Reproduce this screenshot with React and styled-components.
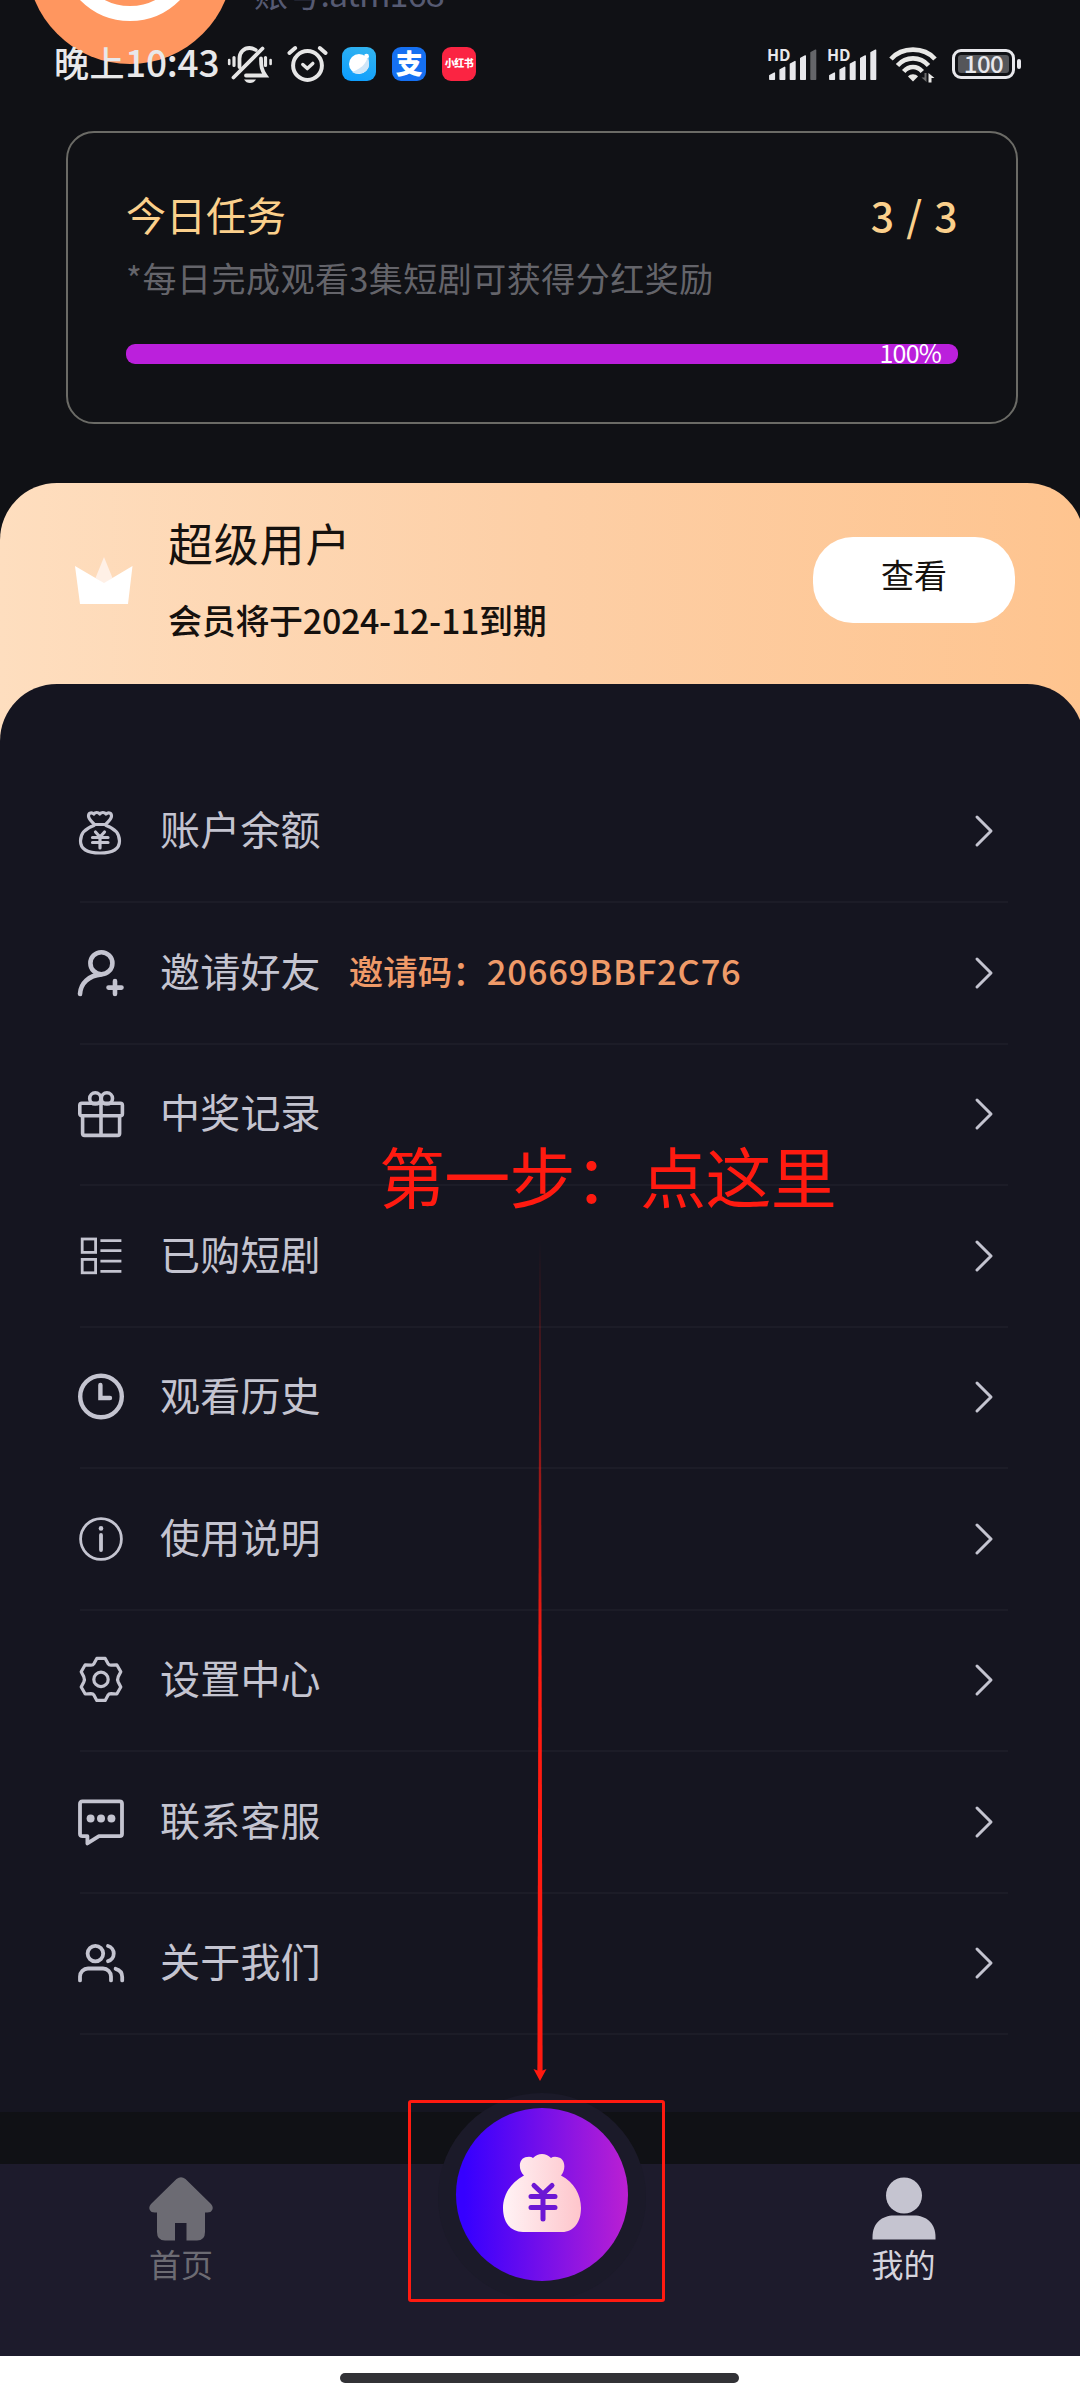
import styled, { createGlobalStyle } from 'styled-components';

const App = () => {
  return (
    <>
      <GlobalStyle />
      <Page>
        <StatusBar />
        <Profile>
          <Avatar>
            <AvatarRing />
          </Avatar>
          <Account>账号:atm168</Account>
        </Profile>
        <TaskCard done={3} total={3} />
        <MemberCard>
          <MemberInfo>
            <Crown />
            <MemberText>
              <MemberTitle>超级用户</MemberTitle>
              <MemberExpire>会员将于2024-12-11到期</MemberExpire>
            </MemberText>
            <ViewBtn>查看</ViewBtn>
          </MemberInfo>
          <Menu>
            {menus.map((el) => (
              <MenuRow key={el.label}>
                <MenuIcon viewBox="0 0 48 48">{el.icon}</MenuIcon>
                <MenuLabel>{el.label}</MenuLabel>
                {el.extra && (
                  <InviteCode>
                    {el.extra}
                    <Code>{el.code}</Code>
                  </InviteCode>
                )}
                <Chevron viewBox="0 0 24 36">
                  <path d="M5 4 L19 18 L5 32" />
                </Chevron>
              </MenuRow>
            ))}
          </Menu>
        </MemberCard>
        <TabBar />
        <HomeIndicator>
          <Handle />
        </HomeIndicator>
        <Guide />
      </Page>
    </>
  );
};

//StatusBar
const StatusBar = () => (
  <StatusWrapper>
    <Time>
      晚上<TimeNum>10:43</TimeNum>
    </Time>
    <StatusSvg width="46" height="40" viewBox="0 0 46 40">
      <g fill="none" stroke="#e6e6e6" strokeWidth="3.8" strokeLinecap="round">
        <path d="M12.5 23 V14.5 C12.5 8 17 4 22.5 4 C25 4 27 4.8 28.8 6" />
        <path d="M34 14.5 C34 22 34.5 26 38.5 31.5 H19" />
        <path d="M6.5 33.5 L35.5 4.5" />
        <path d="M7 13.5 V21.5 M38.5 13.5 V21.5" strokeWidth="3.2" />
        <path d="M2.2 16 V20 M43.6 16 V20" strokeWidth="2.6" />
      </g>
      <path d="M17 35.5 H29 C27.5 38 25.5 39 23 39 C20.5 39 18.5 38 17 35.5Z" fill="#e6e6e6" />
    </StatusSvg>
    <StatusSvg width="42" height="40" viewBox="0 0 42 40" $left={13}>
      <g fill="none" stroke="#e6e6e6" strokeLinecap="round" strokeLinejoin="round">
        <circle cx="21.5" cy="21.5" r="14.4" strokeWidth="4" />
        <path d="M3.4 9 L9.2 4 M39.6 9 L33.8 4" strokeWidth="4" />
        <path d="M16.8 20.5 L21.3 24.6 L26.8 19.4" strokeWidth="3.4" />
      </g>
    </StatusSvg>
    <AppBadge $bg="linear-gradient(200deg, #35b5ee, #0a9cff)" $left={14}>
      <svg width="34" height="34" viewBox="0 0 34 34">
        <circle cx="17" cy="17" r="10" fill="#fff" />
        <path d="M26 7 C26 13 22 21 10 25 C18 30 28 24 27 16Z" fill="#cfe6f8" />
        <circle cx="24.5" cy="9.2" r="2.4" fill="#fff" />
      </svg>
    </AppBadge>
    <AppBadge $bg="#1570f2" $left={16} $size={27}>
      支
    </AppBadge>
    <AppBadge $bg="#fb2442" $left={16} $size={10}>
      小红书
    </AppBadge>
    <Spacer />
    <Signal weak />
    <Signal />
    <StatusSvg width="50" height="40" viewBox="0 0 50 40" $left={9}>
      <g fill="none" stroke="#e8e8e6" strokeWidth="4.6">
        <path d="M3 15 C14 2.5 36 2.5 47 15" />
        <path d="M9.5 21.5 C18 12 32 12 40.5 21.5" />
        <path d="M15.7 27.5 C21 21.5 29 21.5 34.3 27.5" />
      </g>
      <path d="M25 37.5 L20 32.6 C22.5 29.6 27.5 29.6 30 32.6Z" fill="#e8e8e6" />
      <path d="M38.5 29 V38 L33.5 33.5 H36.5 V29Z" fill="#6b6b6b" />
      <path d="M40.5 38.5 V29 L46.5 34 H43.5 V38.5Z" fill="#e8e8e6" />
    </StatusSvg>
    <Battery>
      <BatteryLevel>100</BatteryLevel>
    </Battery>
    <BatteryTip />
  </StatusWrapper>
);

const bars = [0, 1, 2, 3, 4];

const Signal = ({ weak }) => (
  <StatusSvg width="52" height="40" viewBox="0 0 52 40" $left={8}>
    <HdText x="0" y="16.5">
      HD
    </HdText>
    {bars.map((i) => (
      <path
        key={i}
        d={`M${2.8 + i * 10.3} 35.2 V${31.5 - i * 5.7} L${7.4 + i * 10.3} ${29 - i * 5.7} V35.2Z`}
        fill={weak && i === 4 ? '#65666a' : '#e8e8ec'}
        stroke={weak && i === 4 ? '#65666a' : '#e8e8ec'}
        strokeWidth="1.4"
        strokeLinejoin="round"
      />
    ))}
  </StatusSvg>
);

//TaskCard
const TaskCard = ({ done, total }) => {
  const percent = Math.round((done / total) * 100);
  return (
    <TaskWrapper>
      <TaskHead>
        <span>今日任务</span>
        <TaskCount>
          {done} / {total}
        </TaskCount>
      </TaskHead>
      <TaskDesc>*每日完成观看3集短剧可获得分红奖励</TaskDesc>
      <Progress>
        <ProgressFill style={{ width: `${percent}%` }}>{percent}%</ProgressFill>
      </Progress>
    </TaskWrapper>
  );
};

const Crown = () => (
  <CrownSvg width="58" height="48" viewBox="0 0 58 48">
    <path d="M29 0 L37.5 21 L29 27 L20.5 21Z" fill="#fff0e6" />
    <path d="M0 9 L29 26 L57.5 9 L53 47 H5Z" fill="#fff" />
  </CrownSvg>
);

//Menu
const menus = [
  {
    label: '账户余额',
    icon: (
      <g strokeWidth="3.2">
        <path d="M17.5 17.5 C14 13.5 11.5 12 11.5 9 C11.5 5.5 15 5 16.8 7 C18.3 5 21.2 5 22.8 7 C24.4 5 27.4 5 29 7 C31 5 34.5 5.5 34.5 9 C34.5 12 32 13.5 28.5 17.5Z" />
        <path d="M17 18.5 C8 21.5 3.5 27.5 3.5 34 C3.5 42 10 46 23 46 C36 46 42.5 42 42.5 34 C42.5 27.5 38 21.5 29 18.5" />
        <path d="M18.5 25 L23 30 L27.5 25 M15.5 30.5 H31 M15.5 35.5 H31 M23 30 V41" />
      </g>
    ),
  },
  {
    label: '邀请好友',
    extra: '邀请码：',
    code: '20669BBF2C76',
    icon: (
      <g strokeWidth="4.6">
        <circle cx="24.4" cy="14.2" r="11" />
        <path d="M24.4 25.4 C12 26.5 3.6 34 3 45" />
        <path d="M31.5 38.6 H44.5 M38 32 V45" />
      </g>
    ),
  },
  {
    label: '中奖记录',
    icon: (
      <g strokeWidth="3.6">
        <rect x="2.8" y="13.2" width="42.6" height="12.6" rx="2" />
        <path d="M5.6 26 V43.5 Q5.6 45.4 7.6 45.4 H40.6 Q42.6 45.4 42.6 43.5 V26" />
        <path d="M24 13 V45" />
        <circle cx="18.3" cy="8.4" r="5.6" />
        <circle cx="29.9" cy="8.4" r="5.6" />
      </g>
    ),
  },
  {
    label: '已购短剧',
    icon: (
      <g strokeWidth="2.8" strokeLinecap="butt" strokeLinejoin="miter">
        <rect x="5.2" y="7" width="13.4" height="13.4" />
        <rect x="5.2" y="27.4" width="13.4" height="13.4" />
        <path d="M23.4 8.6 H44.4 M23.4 18.7 H44.4 M23.4 29.2 H44.4 M23.4 39.4 H44.4" />
      </g>
    ),
  },
  {
    label: '观看历史',
    icon: (
      <g strokeWidth="4.4">
        <circle cx="24" cy="23.5" r="20.8" />
        <path d="M23.4 12 V25 H33" strokeLinejoin="miter" />
      </g>
    ),
  },
  {
    label: '使用说明',
    icon: (
      <g>
        <circle cx="24" cy="24" r="20.4" strokeWidth="2.8" />
        <path d="M24 20 V35" strokeWidth="3.8" />
        <circle cx="24" cy="13.4" r="2.3" fill="#c4c4d0" stroke="none" />
      </g>
    ),
  },
  {
    label: '设置中心',
    icon: (
      <g strokeWidth="3.2">
        <circle cx="24" cy="23.4" r="7.2" />
        <path d="M19.8 2.4 H28.2 L31 7.6 Q32 9.2 34 9.2 L39.8 8.8 L43.8 15.8 L41.2 20.8 Q40 23.4 41.2 26 L43.8 31 L39.8 38 L34 37.6 Q32 37.6 31 39.2 L28.2 44.4 H19.8 L17 39.2 Q16 37.6 14 37.6 L8.2 38 L4.2 31 L6.8 26 Q8 23.4 6.8 20.8 L4.2 15.8 L8.2 8.8 L14 9.2 Q16 9.2 17 7.6Z" />
      </g>
    ),
  },
  {
    label: '联系客服',
    icon: (
      <g>
        <path
          strokeWidth="3.8"
          d="M5.4 3.4 H42.6 Q45 3.4 45 5.8 V36 Q45 38.2 42.6 38.2 H22 L10.4 45.4 V38.2 H5.4 Q3 38.2 3 36 V5.8 Q3 3.4 5.4 3.4Z"
        />
        <g fill="#c4c4d0" stroke="none">
          <circle cx="13.6" cy="20.6" r="4" />
          <circle cx="24" cy="20.6" r="4" />
          <circle cx="34.4" cy="20.6" r="4" />
        </g>
      </g>
    ),
  },
  {
    label: '关于我们',
    icon: (
      <g strokeWidth="3.8">
        <circle cx="18.4" cy="14.6" r="7.8" />
        <path d="M3 41.4 V37.5 A8 8 0 0 1 11 29.5 H26 A8 8 0 0 1 34 37.5 V41.4" />
        <path d="M31 7 A7.9 7.9 0 0 1 31 22.2" />
        <path d="M38.6 29.8 C43 31 45.2 34 45.2 38 V41.4" />
      </g>
    ),
  },
];

//TabBar
const TabBar = () => (
  <TabWrapper>
    <Tab>
      <svg width="64" height="64" viewBox="0 0 64 64" fill="#6c6b73">
        <path d="M27.5 2 Q32 -1.5 36.5 2 L62 27 Q65.5 31 62 34.5 Q61 35.5 56 35.5 V55 Q56 63.5 48 63.5 H37.5 V46 H26 V63.5 H16 Q8 63.5 8 55 V35.5 Q3 35.5 2 34.5 Q-1.5 31 2 27Z" />
      </svg>
      <TabText>首页</TabText>
    </Tab>
    <Tab>
      <Halo>
        <BagBtn>
          <svg width="80" height="80" viewBox="0 0 80 80">
            <defs>
              <linearGradient id="bag" x1="0" x2="1" y1="0" y2="0">
                <stop offset="0" stopColor="#fff3f5" />
                <stop offset="1" stopColor="#fec5cb" />
              </linearGradient>
            </defs>
            <path
              fill="url(#bag)"
              d="M22 22.5 C16 17 16 5 25 4 Q29 3.4 31 5 Q35 1 40 1 Q45 1 49 5 Q51 3.4 55 4 C64 5 64 17 59 22.5 C72 29 79 42 79 55 C79 69 72 79 60 79 H21 C8 79 1 69 1 55 C1 42 9 29 22 22.5Z"
            />
            <path
              fill="none"
              stroke="#6c17d4"
              strokeWidth="5"
              strokeLinecap="round"
              strokeLinejoin="round"
              d="M32 32.5 L41 41 L50 32.5 M29 43.5 H53 M29 54.5 H53 M41 42 V66"
            />
          </svg>
        </BagBtn>
      </Halo>
    </Tab>
    <Tab $shift={5}>
      <svg width="64" height="64" viewBox="0 0 64 64" fill="#c5c4d0">
        <circle cx="32" cy="18.5" r="18" />
        <path d="M.5 62.5 V60 C.5 46 10 38.5 22 38.5 H42 C54 38.5 63.5 46 63.5 60 V62.5Z" />
      </svg>
      <TabText $active>我的</TabText>
    </Tab>
  </TabWrapper>
);

//Guide
const Guide = () => (
  <>
    <GuideText>第一步：点这里</GuideText>
    <GuideArrow width="16" height="842" viewBox="0 0 16 842">
      <defs>
        <linearGradient id="arrow" x1="0" x2="0" y1="0" y2="1">
          <stop offset="0" stopColor="#ff1a10" stopOpacity="0" />
          <stop offset="0.5" stopColor="#ff1a10" />
        </linearGradient>
      </defs>
      <path d="M7.4 0 H8.6 L10.6 832 H5.4Z" fill="url(#arrow)" />
      <path d="M1.5 829 L8 831.5 L14.5 829 L8 841Z" fill="#ff1a10" />
    </GuideArrow>
    <GuideBox />
  </>
);

const GlobalStyle = createGlobalStyle`
  * {
    box-sizing: border-box;
  }
  body {
    margin: 0;
    background: #101115;
    font-family: 'Noto Sans CJK SC', sans-serif;
  }
  svg {
    display: block;
    flex-shrink: 0;
    overflow: visible;
  }
`;

const Page = styled.div`
  position: relative;
  display: flex;
  flex-direction: column;
  width: 1080px;
  height: 2400px;
  overflow: hidden;
  background: #101115;
`;

const StatusWrapper = styled.div`
  position: absolute;
  z-index: 2;
  top: 44px;
  left: 0;
  width: 100%;
  height: 40px;
  padding: 0 59px 0 54px;
  display: flex;
  align-items: center;
`;
const Time = styled.div`
  width: 173px;
  padding-bottom: 5px;
  font-size: 35px;
  font-weight: 500;
  line-height: 40px;
  letter-spacing: 0.5px;
  white-space: nowrap;
  color: #e8e8ea;
`;
const TimeNum = styled.span`
  font-size: 37px;
  letter-spacing: -0.2px;
`;
const StatusSvg = styled.svg`
  margin-left: ${(props) => props.$left || 0}px;
`;
const HdText = styled.text`
  font: 700 16px 'Noto Sans CJK SC', sans-serif;
  fill: #e8e8ec;
`;
const AppBadge = styled.div`
  width: 34px;
  height: 34px;
  margin-left: ${(props) => props.$left}px;
  border-radius: 9px;
  background: ${(props) => props.$bg};
  color: #fff;
  font-size: ${(props) => props.$size || 10}px;
  font-weight: 900;
  line-height: 31px;
  letter-spacing: -0.5px;
  text-align: center;
  white-space: nowrap;
`;
const Spacer = styled.div`
  flex: 1;
`;
const Battery = styled.div`
  width: 63px;
  height: 30px;
  margin-left: 14px;
  padding: 3px;
  border: 3px solid #e8e8ec;
  border-radius: 9px;
`;
const BatteryLevel = styled.div`
  height: 18px;
  border-radius: 3px;
  background: #55565a;
  color: #e8e8ec;
  font-size: 24px;
  font-weight: 500;
  line-height: 16px;
  text-align: center;
  letter-spacing: -0.5px;
`;
const BatteryTip = styled.div`
  width: 4px;
  height: 10px;
  margin-left: 2px;
  border-radius: 2px;
  background: #e8e8ec;
`;

//Profile
const Profile = styled.div`
  display: flex;
  height: 131px;
  flex-shrink: 0;
`;
const Avatar = styled.div`
  width: 206px;
  height: 206px;
  margin: -142px 0 0 27px;
  padding: 24px;
  border-radius: 50%;
  background: #ff965f;
`;
const AvatarRing = styled.div`
  width: 140px;
  height: 140px;
  margin: -1px auto 0;
  border: 15px solid #fff;
  border-radius: 50%;
`;
const Account = styled.div`
  margin: -29px 0 0 21px;
  font-size: 34px;
  line-height: 44px;
  letter-spacing: -0.8px;
  color: #565a72;
`;

const TaskWrapper = styled.div`
  flex-shrink: 0;
  width: 952px;
  height: 293px;
  margin-left: 66px;
  padding: 57px 58px 0;
  border: 2px solid #6b6b66;
  border-radius: 28px;
`;
const TaskHead = styled.div`
  display: flex;
  justify-content: space-between;
  color: #fbd08c;
  font-size: 40px;
  line-height: 48px;
`;
const TaskCount = styled.span`
  margin-right: -1px;
  font-size: 41px;
  font-weight: 500;
  letter-spacing: 1.4px;
`;
const TaskDesc = styled.div`
  margin-top: 18px;
  font-size: 34px;
  line-height: 44px;
  letter-spacing: 0.5px;
  color: #64646a;
`;
const Progress = styled.div`
  height: 20px;
  margin-top: 44px;
  border-radius: 9px;
  overflow: hidden;
`;
const ProgressFill = styled.div`
  height: 20px;
  padding-right: 17px;
  background: #bb20dc;
  color: #fff;
  font-size: 25px;
  line-height: 17px;
  letter-spacing: -0.8px;
  text-align: right;
`;

//MemberCard
const MemberCard = styled.div`
  flex-shrink: 0;
  width: 1084px;
  height: 1629px;
  margin-top: 59px;
  border-radius: 57px 57px 0 0;
  background: linear-gradient(90deg, #fedebf, #fdcfa6 50%, #fec48f);
`;
const MemberInfo = styled.div`
  display: flex;
  height: 201px;
  padding: 35px 69px 0 75px;
  color: #15110e;
`;
const CrownSvg = styled.svg`
  margin-top: 39px;
`;
const MemberText = styled.div`
  flex: 1;
  margin: -3px 0 0 35px;
`;
const MemberTitle = styled.div`
  font-size: 45px;
  line-height: 56px;
  letter-spacing: 0.8px;
`;
const MemberExpire = styled.div`
  margin-top: 27px;
  font-size: 34px;
  font-weight: 500;
  line-height: 44px;
  letter-spacing: -0.3px;
`;
const ViewBtn = styled.button`
  width: 202px;
  height: 86px;
  margin-top: 19px;
  padding: 0 0 13px;
  border: none;
  border-radius: 40px;
  background: #fff;
  color: #15110e;
  font-family: inherit;
  font-size: 33px;
`;
const Menu = styled.div`
  height: 1428px;
  padding: 77.5px 76px 0 80px;
  border-radius: 57px 57px 0 0;
  background: #151520;
`;
const MenuRow = styled.div`
  display: flex;
  align-items: center;
  height: 141.5px;
  border-bottom: 2px solid #1c1c27;
`;
const MenuIcon = styled.svg`
  width: 48px;
  height: 48px;
  margin-left: -3px;
  fill: none;
  stroke: #c4c4d0;
  stroke-linecap: round;
  stroke-linejoin: round;
`;
const MenuLabel = styled.div`
  margin-left: 35px;
  padding-bottom: 6px;
  font-size: 40px;
  line-height: 50px;
  letter-spacing: 0.2px;
  color: #c4c4d0;
`;
const InviteCode = styled.div`
  margin-left: 28px;
  padding-bottom: 5px;
  font-size: 34.5px;
  font-weight: 500;
  line-height: 44px;
  color: #ef9a68;
`;
const Code = styled.span`
  letter-spacing: 0.8px;
`;
const Chevron = styled.svg`
  width: 24px;
  height: 36px;
  margin-left: auto;
  margin-right: 12px;
  fill: none;
  stroke: #c4c4d0;
  stroke-width: 3;
  stroke-linecap: round;
  stroke-linejoin: round;
`;

const TabWrapper = styled.div`
  flex-shrink: 0;
  display: flex;
  height: 192px;
  margin-top: 52px;
  padding-left: 1px;
  background: #1d1b2c;
`;
const Tab = styled.div`
  flex: none;
  width: 360px;
  display: flex;
  flex-direction: column;
  align-items: center;
  padding: 13px 0 0 ${(props) => props.$shift || 0}px;
`;
const TabText = styled.div`
  margin-top: -1px;
  font-size: 32px;
  line-height: 46px;
  color: ${(props) => (props.$active ? '#d5d4dd' : '#6c6b73')};
`;
const Halo = styled.div`
  width: 208px;
  height: 208px;
  flex-shrink: 0;
  margin: -84px 0 0 2px;
  padding: 15px 18px;
  border-radius: 50%;
  background: #1b1a29;
`;
const BagBtn = styled.div`
  width: 172px;
  height: 173px;
  display: flex;
  align-items: center;
  justify-content: center;
  padding: 0 1px 3px 0;
  border-radius: 50%;
  background: linear-gradient(90deg, #3600ff 5%, #bb20d2);
`;

const HomeIndicator = styled.div`
  flex: 1;
  display: flex;
  justify-content: center;
  padding: 17px 1px 0 0;
  background: #fff;
`;
const Handle = styled.div`
  width: 399px;
  height: 10px;
  border-radius: 5px;
  background: #323236;
`;

//Guide
const GuideText = styled.div`
  position: absolute;
  top: 1132px;
  left: 379px;
  font-size: 66px;
  line-height: 84px;
  letter-spacing: -0.7px;
  white-space: nowrap;
  color: #ff1a10;
`;
const GuideArrow = styled.svg`
  position: absolute;
  top: 1240px;
  left: 532px;
`;
const GuideBox = styled.div`
  position: absolute;
  top: 2100px;
  left: 408px;
  width: 257px;
  height: 202px;
  border: 3px solid #ff1a10;
  border-radius: 3px;
`;

export default App;
